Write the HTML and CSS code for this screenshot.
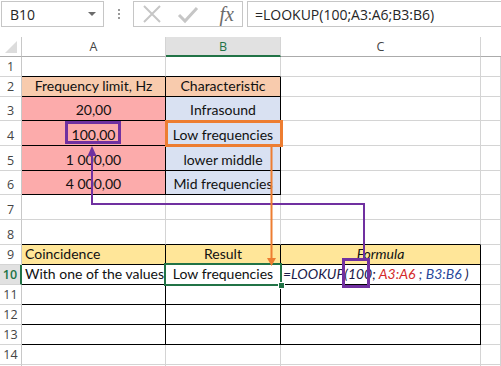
FILE: index.html
```html
<!DOCTYPE html>
<html lang="en">
<head>
    <meta charset="UTF-8">
    <title>LOOKUP</title>
    <link rel="stylesheet" href="styles.css">
</head>
<body>
<div class="page">
    <!-- Barra de fórmulas -->
    <div class="topbar">
        <div class="namebox">
            <span>B10</span>
            <span class="caret"></span>
        </div>
        <div class="dots"><i></i><i></i><i></i></div>
        <div class="buttons">
            <svg width="20" height="20" viewBox="0 0 20 20"><path d="M2 2 L18 18 M18 2 L2 18" stroke="#c6c6c6" stroke-width="2" fill="none"/></svg>
            <svg width="22" height="20" viewBox="0 0 22 20"><path d="M2 11 L8 17 L20 4" stroke="#c6c6c6" stroke-width="3" fill="none"/></svg>
            <span class="fx">fx</span>
        </div>
        <div class="formula">=LOOKUP(100;A3:A6;B3:B6)</div>
    </div>

    <!-- Hoja -->
    <div class="sheet">
        <div class="corner"><span></span></div>
        <div class="colhead">A</div>
        <div class="colhead active">B</div>
        <div class="colhead">C</div>
        <div class="colhead last"></div>

        <div class="rowhead">1</div>
        <div class="cell bb"></div><div class="cell bb"></div><div class="cell"></div><div class="cell"></div>

        <div class="rowhead">2</div>
        <div class="cell center peach bb br">Frequency limit, Hz</div>
        <div class="cell center peach bb br">Characteristic</div>
        <div class="cell"></div><div class="cell"></div>

        <div class="rowhead">3</div>
        <div class="cell center pink bb br">20,00</div>
        <div class="cell center blue bb br">Infrasound</div>
        <div class="cell"></div><div class="cell"></div>

        <div class="rowhead">4</div>
        <div class="cell center pink bb br">100,00</div>
        <div class="cell center blue bb br">Low frequencies</div>
        <div class="cell"></div><div class="cell"></div>

        <div class="rowhead">5</div>
        <div class="cell center pink bb br">1 000,00</div>
        <div class="cell center blue bb br">lower middle</div>
        <div class="cell"></div><div class="cell"></div>

        <div class="rowhead">6</div>
        <div class="cell center pink bb br">4 000,00</div>
        <div class="cell center blue bb br">Mid frequencies</div>
        <div class="cell"></div><div class="cell"></div>

        <div class="rowhead">7</div>
        <div class="cell"></div><div class="cell"></div><div class="cell"></div><div class="cell"></div>

        <div class="rowhead">8</div>
        <div class="cell bb"></div><div class="cell bb"></div><div class="cell bb"></div><div class="cell"></div>

        <div class="rowhead">9</div>
        <div class="cell yellow bb br">Coincidence</div>
        <div class="cell center yellow bb br">Result</div>
        <div class="cell center yellow bb br"><em>Formula</em></div>
        <div class="cell"></div>

        <div class="rowhead active">10</div>
        <div class="cell bb br">With one of the values</div>
        <div class="cell center bb br">Low frequencies</div>
        <div class="cell bb br code"><em>=LOOKUP(100; <span class="ref-a">A3:A6</span> <span class="sep">;</span> <span class="ref-b">B3:B6</span> )</em></div>
        <div class="cell"></div>

        <div class="rowhead">11</div>
        <div class="cell bb br"></div><div class="cell bb br"></div><div class="cell bb br"></div><div class="cell"></div>
        <div class="rowhead">12</div>
        <div class="cell bb br"></div><div class="cell bb br"></div><div class="cell bb br"></div><div class="cell"></div>
        <div class="rowhead">13</div>
        <div class="cell bb br"></div><div class="cell bb br"></div><div class="cell bb br"></div><div class="cell"></div>
        <div class="rowhead">14</div>
        <div class="cell"></div><div class="cell"></div><div class="cell"></div><div class="cell"></div>
        <div class="rowhead"></div>
        <div class="cell"></div><div class="cell"></div><div class="cell"></div><div class="cell"></div>
    </div>

    <!-- Selección activa -->
    <div class="selection"><span class="handle"></span></div>

    <!-- Flechas y marcos -->
    <svg class="marks" width="501" height="366" viewBox="0 0 501 366">
        <g fill="none" stroke="#7030a0">
            <rect x="66.5" y="122.5" width="53" height="20" stroke-width="3"/>
            <rect x="343.5" y="259.5" width="25" height="27" stroke-width="3"/>
            <path d="M364 258 V204 H92 V154" stroke-width="2"/>
        </g>
        <polygon points="92,146 87.5,156 96.5,156" fill="#7030a0"/>
        <rect x="166.5" y="121.5" width="115" height="24" fill="none" stroke="#ed7d31" stroke-width="3"/>
        <path d="M271.5 147 V259" stroke="#ed7d31" stroke-width="2" fill="none"/>
        <polygon points="267,258 276,258 271.5,266" fill="#ed7d31"/>
    </svg>
</div>
</body>
</html>
```

FILE: styles.css
```css
/* General */
* {
    box-sizing: border-box;
}

body {
    margin: 0;
    background: #ffffff;
    font-family: 'Lato', sans-serif;
    overflow: hidden;
}

.page {
    position: relative;
    width: 501px;
    height: 366px;
    overflow: hidden;
}

/* Barra de fórmulas */
.topbar {
    display: flex;
    align-items: stretch;
    height: 27px;
    padding-top: 1px;
    margin-bottom: 10px;
    font-family: 'Open Sans', sans-serif;
}

.namebox {
    width: 103px;
    margin-left: 1px;
    border: 1px solid #c6c6c6;
    display: flex;
    align-items: center;
    justify-content: space-between;
    padding: 0 7px 0 8px;
    font-size: 14px;
    color: #262626;
}

.caret {
    width: 0;
    height: 0;
    border-left: 4px solid transparent;
    border-right: 4px solid transparent;
    border-top: 4px solid #6b6b6b;
}

.dots {
    width: 29px;
    display: flex;
    flex-direction: column;
    align-items: center;
    justify-content: center;
    gap: 2px;
}

.dots i {
    width: 2px;
    height: 2px;
    background: #9a9a9a;
}

.buttons {
    width: 110px;
    border: 1px solid #c6c6c6;
    display: flex;
    align-items: center;
    padding: 0 8px 0 8px;
    gap: 15px;
}

.fx {
    margin-left: auto;
    font-family: 'Liberation Serif', serif;
    font-style: italic;
    font-size: 20px;
    color: #6b6b6b;
    line-height: 1;
}

.formula {
    flex: 1;
    margin-left: 4px;
    border: 1px solid #c6c6c6;
    border-right: none;
    padding: 0 0 0 7px;
    display: flex;
    align-items: center;
    font-size: 14px;
    color: #262626;
}

/* Hoja */
.sheet {
    display: grid;
    grid-template-columns: 22px 144px 115px 200px 1fr;
    grid-template-rows: 20px 20px 20px 24px 25px 25px 24px 25px 25px 20px 20px 20px 20px 20px 20px 20px;
    font-size: 14px;
    color: #111111;
}

.corner {
    border-right: 1px solid #c8c8c8;
    border-bottom: 1px solid #ababab;
    position: relative;
}

.corner span {
    position: absolute;
    right: 4px;
    bottom: 3px;
    width: 12px;
    height: 12px;
    background: #dcdcdc;
    clip-path: polygon(100% 0, 100% 100%, 0 100%);
}

.colhead {
    border-right: 1px solid #d4d4d4;
    border-bottom: 1px solid #ababab;
    display: flex;
    align-items: center;
    justify-content: center;
    font-family: 'Open Sans', sans-serif;
    font-size: 12.5px;
    color: #444444;
}

.colhead.last {
    border-right: none;
}

.colhead.active {
    background: #e1e1e1;
    border-bottom: 2px solid #217346;
    color: #217346;
    padding-top: 1px;
}

.rowhead {
    border-right: 1px solid #c8c8c8;
    border-bottom: 1px solid #d4d4d4;
    display: flex;
    align-items: flex-end;
    justify-content: center;
    padding-bottom: 1px;
    font-family: 'Open Sans', sans-serif;
    font-size: 12.5px;
    color: #444444;
}

.rowhead.active {
    background: #e1e1e1;
    border-right: 2px solid #217346;
    color: #217346;
    font-weight: 600;
}

.cell {
    border-right: 1px solid #d4d4d4;
    border-bottom: 1px solid #d4d4d4;
    display: flex;
    align-items: flex-end;
    padding: 0 3px 1px 3px;
    white-space: nowrap;
    overflow: visible;
    line-height: 18px;
}

.cell.center {
    justify-content: center;
    overflow: hidden;
}

.bb {
    border-bottom-color: #000000;
}

.br {
    border-right-color: #000000;
}

.peach {
    background: #f8cbad;
}

.pink {
    background: #fcabab;
}

.blue {
    background: #d9e1f2;
}

.yellow {
    background: #ffe699;
}

.code {
    padding-left: 2px;
    color: #1a1a4a;
}

.ref-a {
    color: #d42a2a;
}

.sep {
    color: #1f3c8c;
}

.ref-b {
    color: #2a4a9c;
}

/* Selección */
.selection {
    position: absolute;
    left: 164px;
    top: 263px;
    width: 118px;
    height: 23px;
    border: 2px solid #217346;
}

.handle {
    position: absolute;
    right: -5px;
    bottom: -5px;
    width: 7px;
    height: 7px;
    background: #217346;
    border: 1px solid #ffffff;
}

.marks {
    position: absolute;
    left: 0;
    top: 0;
    pointer-events: none;
}
```
